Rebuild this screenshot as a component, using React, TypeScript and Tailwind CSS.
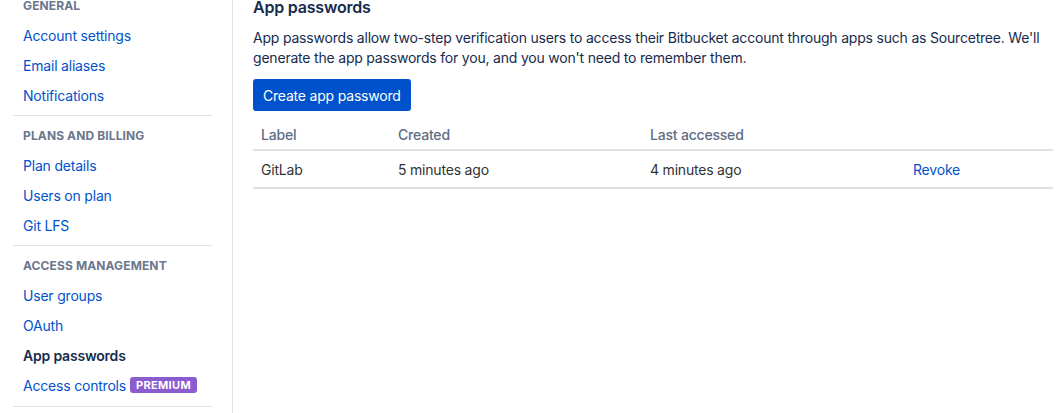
import React from "react";

const font = { fontFamily: "Inter, 'Noto Sans', 'Liberation Sans', sans-serif" };

function Heading({ children }: { children: React.ReactNode }) {
  return (
    <div className="h-[30px] flex items-center pt-[2px] pl-[23px] text-[12px] font-bold uppercase tracking-[0.01em] text-[#6b778c]">
      {children}
    </div>
  );
}

function Item({ children, active }: { children: React.ReactNode; active?: boolean }) {
  return (
    <div
      className={
        "h-[30px] flex items-center pl-[23px] text-[14px] " +
        (active ? "font-semibold text-[#172b4d]" : "text-[#0052cc]")
      }
    >
      {children}
    </div>
  );
}

function Sep() {
  return <div className="mx-[13px] mt-[5px] mb-[4px] h-px bg-[#dfe1e6] w-[199px]" />;
}

export default function App() {
  return (
    <div className="flex w-[1062px] h-[413px] overflow-hidden bg-white tracking-[-0.2px]" style={font}>
      <aside className="w-[233px] shrink-0 border-r border-[#dfe1e6] -mt-[10px]">
        <Heading>General</Heading>
        <Item>Account settings</Item>
        <Item>Email aliases</Item>
        <Item>Notifications</Item>
        <Sep />
        <Heading>Plans and billing</Heading>
        <Item>Plan details</Item>
        <Item>Users on plan</Item>
        <Item>Git LFS</Item>
        <Sep />
        <Heading>Access management</Heading>
        <Item>User groups</Item>
        <Item>OAuth</Item>
        <Item active>App passwords</Item>
        <div className="h-[30px] flex items-center pl-[23px] text-[14px] text-[#0052cc]">
          Access controls
          <span className="ml-[4px] rounded-[3px] bg-[#8a5cd0] px-[6px] h-[16px] flex items-center text-[11px] font-bold text-white tracking-[0.03em]">
            PREMIUM
          </span>
        </div>
        <div className="mx-[13px] mt-[6px] h-px bg-[#dfe1e6] w-[199px]" />
      </aside>
      <main className="flex-1 pl-[20px] pr-[9px]">
        <h1 className="-mt-[5px] text-[16px] leading-[24px] font-semibold text-[#172b4d]">App passwords</h1>
        <p className="mt-[9px] text-[14px] leading-[20px] text-[#172b4d]">
          App passwords allow two-step verification users to access their Bitbucket account through apps such as Sourcetree. We'll generate the app passwords for you, and you won't need to remember them.
        </p>
        <button className="mt-[11px] h-[32px] rounded-[3px] bg-[#0052cc] px-[10px] text-[14px] text-white">
          Create app password
        </button>
        <table className="mt-[9px] w-full text-[14px] border-collapse">
          <thead>
            <tr className="border-b-2 border-[#dfe1e6] text-left text-[#5e6c84]">
              <th className="h-[30px] w-[137px] pl-[8px] font-medium">Label</th>
              <th className="w-[252px] pl-[8px] font-medium">Created</th>
              <th className="w-[263px] pl-[8px] font-medium">Last accessed</th>
              <th className="pl-[8px]"></th>
            </tr>
          </thead>
          <tbody>
            <tr className="border-b-2 border-[#dfe1e6] text-[#333333]">
              <td className="h-[38px] pl-[8px]">GitLab</td>
              <td className="pl-[8px]">5 minutes ago</td>
              <td className="pl-[8px]">4 minutes ago</td>
              <td className="pl-[8px] text-[#0052cc]">Revoke</td>
            </tr>
          </tbody>
        </table>
      </main>
    </div>
  );
}
